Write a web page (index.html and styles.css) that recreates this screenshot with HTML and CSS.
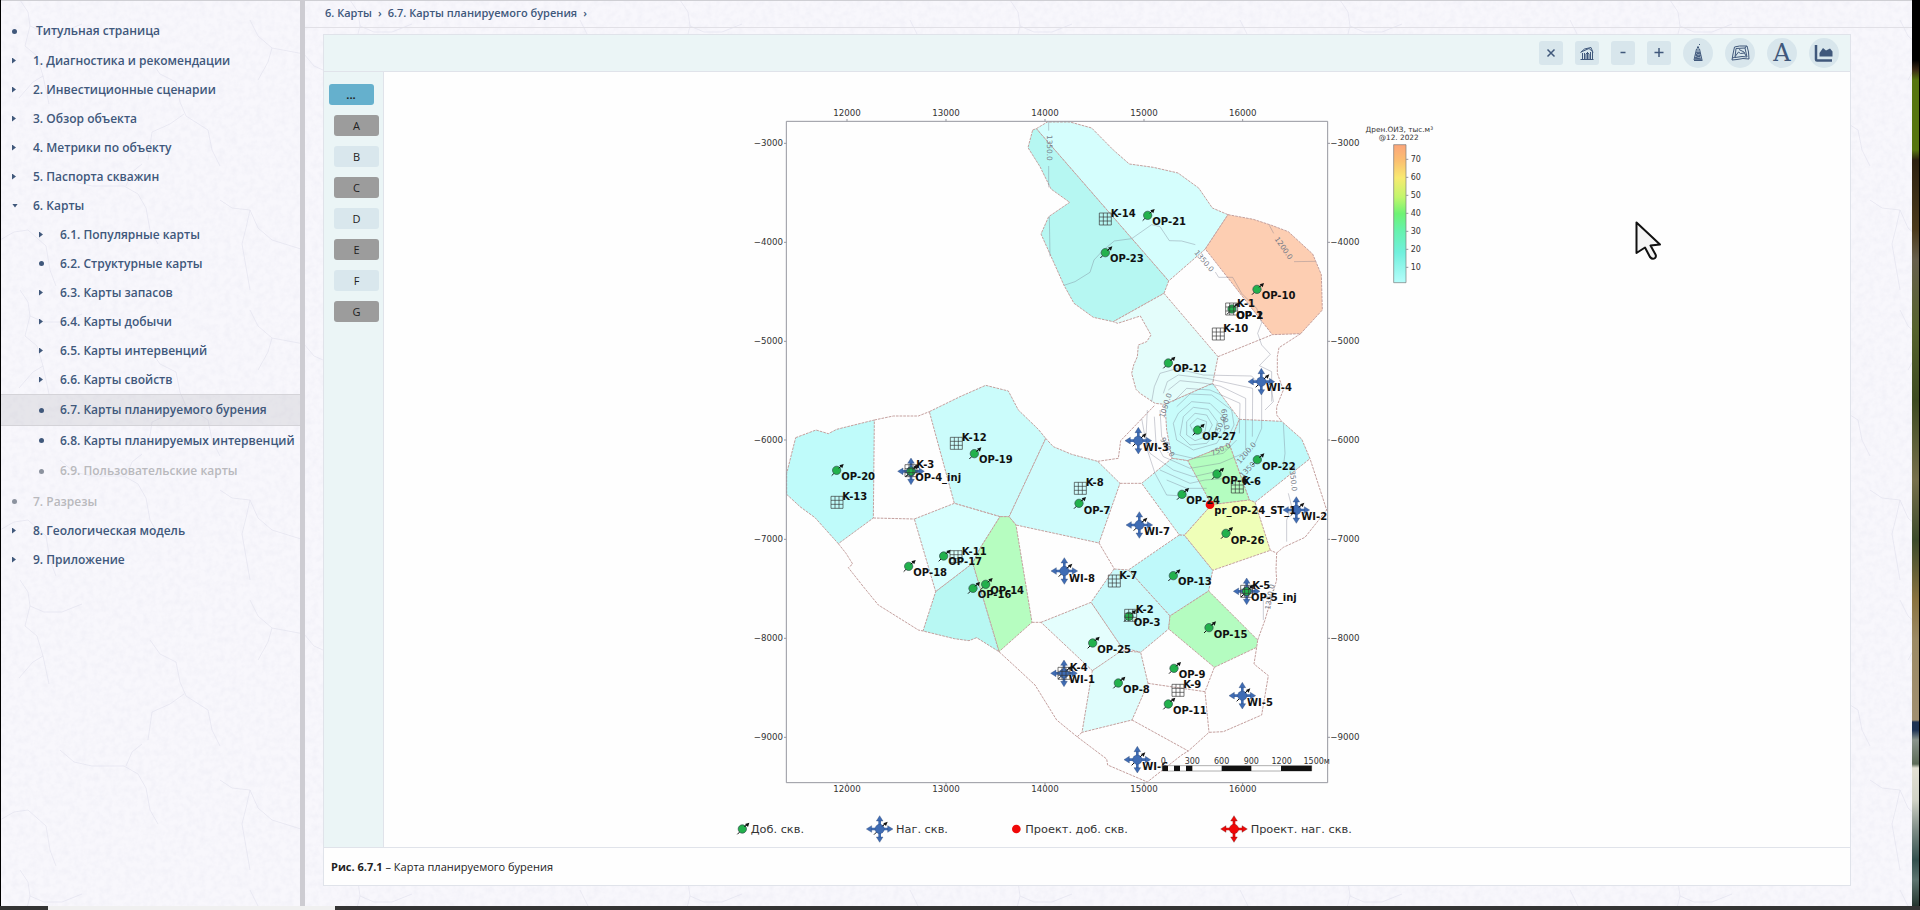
FILE: index.html
```html
<!DOCTYPE html>
<html lang="ru">
<head>
<meta charset="utf-8">
<title>6.7. Карты планируемого бурения</title>
<link rel="stylesheet" href="styles.css">
</head>
<body>
<svg class="texture" aria-hidden="true">
  <defs>
    <filter id="paper" x="0" y="0" width="100%" height="100%">
      <feTurbulence type="fractalNoise" baseFrequency="0.16" numOctaves="4" seed="4"/>
      <feColorMatrix values="0 0 0 0 0.8  0 0 0 0 0.8  0 0 0 0 0.88  0.7 0 0 0 -0.25"/>
    </filter>
    <pattern id="cracks" width="330" height="290" patternUnits="userSpaceOnUse">
      <path d="M20 0l8 12 2 14-5 20 12 10 6 20 6 28M30 26l14 6 18 0 20-8M43 76l-10 6-14 16M150 60l10 14 16 8 4 20 6 14 22 14 4 20 8 16M184 114l-14 10-18 8-4 28M250 20l8 16 14 12 32 6 10 12 18 8M272 48l-4 14-10 18M60 170l14 12 18 4 32 0 14 8 8 14 4 22 8 14M126 186l6-14 10-8M220 200l12 8 18 2 8 18 14 12 32 10M250 210l-4 18-4 16 8 46M0 240l14-8 14-2 18 16 4 24 6 16" fill="none" stroke="#dcdce9" stroke-opacity=".5"/>
    </pattern>
  </defs>
  <rect width="100%" height="100%" filter="url(#paper)"/>
  <rect width="100%" height="100%" fill="url(#cracks)"/>
</svg>

<div class="window">
  <nav class="sidebar" aria-label="Содержание">
    <ul class="tree">
      <li><a class="item item-title" href="#"><i class="dot"></i>Титульная страница</a></li>
      <li><a class="item" href="#"><i class="arrow"></i>1. Диагностика и рекомендации</a></li>
      <li><a class="item" href="#"><i class="arrow"></i>2. Инвестиционные сценарии</a></li>
      <li><a class="item" href="#"><i class="arrow"></i>3. Обзор объекта</a></li>
      <li><a class="item" href="#"><i class="arrow"></i>4. Метрики по объекту</a></li>
      <li><a class="item" href="#"><i class="arrow"></i>5. Паспорта скважин</a></li>
      <li><a class="item" href="#"><i class="arrow arrow-open"></i>6. Карты</a>
        <ul class="tree-sub">
          <li><a class="item" href="#"><i class="arrow"></i>6.1. Популярные карты</a></li>
          <li><a class="item" href="#"><i class="dot"></i>6.2. Структурные карты</a></li>
          <li><a class="item" href="#"><i class="arrow"></i>6.3. Карты запасов</a></li>
          <li><a class="item" href="#"><i class="arrow"></i>6.4. Карты добычи</a></li>
          <li><a class="item" href="#"><i class="arrow"></i>6.5. Карты интервенций</a></li>
          <li><a class="item" href="#"><i class="arrow"></i>6.6. Карты свойств</a></li>
          <li><a class="item item-active" href="#"><i class="dot"></i>6.7. Карты планируемого бурения</a></li>
          <li><a class="item" href="#"><i class="dot"></i>6.8. Карты планируемых интервенций</a></li>
          <li><a class="item item-off item-tall" href="#"><i class="dot"></i>6.9. Пользовательские карты</a></li>
        </ul>
      </li>
      <li><a class="item item-off" href="#"><i class="dot"></i>7. Разрезы</a></li>
      <li><a class="item" href="#"><i class="arrow"></i>8. Геологическая модель</a></li>
      <li><a class="item" href="#"><i class="arrow"></i>9. Приложение</a></li>
    </ul>
  </nav>
  <div class="splitter"></div>

  <main class="content">
    <nav class="crumbs" aria-label="Путь">
      <a href="#">6. Карты</a><span>›</span><a href="#">6.7. Карты планируемого бурения</a><span>›</span>
    </nav>
    <section class="panel">
      <div class="toolbar">
        <button class="tool" aria-label="Закрыть"><svg width="24" height="24"><path d="M8.500 8.500l7 7M15.500 8.500l-7 7" class="ink"/></svg></button>
        <button class="tool" aria-label="Домой"><svg width="24" height="24"><path d="M5.500 11.500L9.500 8l6.500-1.500 2 5M6 11l8-3.500 3.500 3M7.500 18v-6M9.500 18v-6M17.500 18v-7M15.500 18v-7M5.500 18.500h13M11 18v-5q1.500-3 3 0v5M12.500 11v7" class="ink ink-thin"/></svg></button>
        <button class="tool" aria-label="Уменьшить"><svg width="24" height="24"><path d="M9.500 11.500h5" class="ink"/></svg></button>
        <button class="tool" aria-label="Увеличить"><svg width="24" height="24"><path d="M7.500 11.500h9M12 7v9" class="ink"/></svg></button>
        <button class="tool tool-round" aria-label="Скважины"><svg width="30" height="30"><path d="M13.500 11h3l2.500 11h-8zM11 22.500h8.500M13 14l4 2M12.500 17l5 2M12 20l6 1M17 14l-4.500 3M18 17l-6 3M14 9.500h2M15 10V8M16 7l1-1" class="ink ink-thin"/><path d="M14 12h2l2 10h-6z" fill="#40587b" opacity=".5"/></svg></button>
        <button class="tool tool-round" aria-label="Карта"><svg width="30" height="30"><path d="M9.500 9l5-1 7.500 0 1.500 6 .5 7-6-.5-6 1-5 .5 1-6zM11 10.500l9-.5 2 9-5-.5-7 1zM10.500 18l3-4 2 1.500 4-.5M14 11.500l5 2.500 2 4M7.500 20l3-1M20 10l1.500-2" class="ink ink-thin"/></svg></button>
        <button class="tool tool-round tool-letter">A</button>
        <button class="tool tool-round" aria-label="График"><svg width="30" height="30"><path d="M7 7v14.500q0 1 1 1h15" fill="none" stroke="#40587b" stroke-width="2.500"/><path d="M10.500 18.500V15l3.500-5 3 2.500 4-2 2.500 3v5z" fill="#40587b"/></svg></button>
      </div>
      <div class="work">
        <div class="layers">
          <button class="layer layer-main">...</button>
          <button class="layer layer-on">A</button>
          <button class="layer">B</button>
          <button class="layer layer-on">C</button>
          <button class="layer">D</button>
          <button class="layer layer-on">E</button>
          <button class="layer">F</button>
          <button class="layer layer-on">G</button>
        </div>
        <div class="figure">
          <svg class="map" viewBox="-1728 -84 4398 2325" role="img" aria-label="Карта планируемого бурения">
            <defs>
              <linearGradient id="scale" x1="0" y1="0" x2="0" y2="1">
                <stop offset="0" stop-color="#fba57a"/><stop offset=".12" stop-color="#fbc070"/><stop offset=".24" stop-color="#f8ea70"/>
                <stop offset=".38" stop-color="#c2f66c"/><stop offset=".5" stop-color="#6ef374"/><stop offset=".62" stop-color="#66f2ac"/>
                <stop offset=".78" stop-color="#70f0dc"/><stop offset="1" stop-color="#b5fdfb"/>
              </linearGradient>
              <g id="op"><path d="M-15 16L14-13" stroke="#111" stroke-width="3"/><circle r="12.500" fill="#22b14c" stroke="#2d4a4a" stroke-width="2"/><path d="M6-6L12-12" stroke="#111" stroke-width="3"/><path d="M21-19l-4 13-9-9z" fill="#111"/></g>
              <g id="cross"><path d="M-26 0H26M0-26V26" stroke="currentColor" stroke-width="8"/><circle r="14"/><path d="M0-40l10 16H-10zM0 40l10-16H-10zM-40 0l16-10V10zM40 0l-16-10V10z"/></g>
              <g id="wi"><path d="M-17 17L16-16" stroke="#111" stroke-width="3"/><use href="#cross" class="blue"/><path d="M8-8L14-14" stroke="#111" stroke-width="3"/><path d="M24-22l-5 13-8-8z" fill="#111"/></g>
              <path id="k" d="M-18-18H18V18H-18zM-6-18V18M6-18V18M-18-6H18M-18 6H18" fill="none" stroke="#333" stroke-width="2"/>
            </defs>

            <g class="cells">
              <path fill="#d5fefd" d="M229 86L262 66 330 66 395 84 460 150 508 192 580 202 654 219 716 264 757 324 804 344 736 447 626 543z"/>
              <path fill="#b6f7f2" d="M218 90L229 86 626 543 612 580 460 665 400 652 342 610 312 556 278 480 243 402 266 350 329 307 273 267 240 200 204 143z"/>
              <path fill="#fdceb2" d="M804 344L880 358 935 376 985 395 1058 462 1084 524 1087 630 1022 701 937 704 736 447z"/>
              <path fill="#e4fdfb" d="M612 580L774 770 758 850 615 913 585 910 540 880 528 868 515 820 521 795 532 770 535 735 560 725 573 705 541 648 473 670 460 665z"/>
              <path fill="#c8fcfb" d="M615 913L758 850 838 958 808 1033 683 1082 636 1075 620 990z"/>
              <path fill="#bffafa" d="M838 958L965 964 1025 1017 1050 1076 885 1207 868 1200 808 1033z"/>
              <path fill="#b4fdc0" d="M808 1033L868 1200 755 1214 740 1190 683 1082z"/>
              <path fill="#cafcfb" d="M636 1075L683 1082 755 1214 673 1306 658 1305 545 1150z"/>
              <path fill="#efffb8" d="M755 1214L868 1200 885 1207 931 1351 758 1411 673 1306z"/>
              <path fill="#bff9fa" d="M658 1305L673 1306 758 1411 746 1473 630 1548 505 1410z"/>
              <path fill="#cafafb" d="M462 1407L505 1410 630 1548 626 1587 542 1657 485 1642 393 1507z"/>
              <path fill="#b4fcc0" d="M746 1473L893 1620 890 1642 763 1702 626 1587 630 1548z"/>
              <path fill="#e4fefd" d="M243 1567L393 1507 485 1642 480 1660 397 1712z"/>
              <path fill="#dffdfc" d="M397 1712L485 1652 542 1657 564 1750 516 1860 366 1897z"/>
              <path fill="#cffcfc" d="M257 1015L280 1040 335 1063 413 1084 480 1150 417 1329 390 1323 168 1275 147 1250z"/>
              <path fill="#cbfcfb" d="M-92 935L0 890 77 856 145 873 175 930 235 988 257 1015 147 1250 120 1250 -17 1210z"/>
              <path fill="#bffbfa" d="M-493 1013L-432 990 -395 1001 -370 988 -257 960 -260 1254 -365 1331 -435 1253 -480 1220 -520 1183 -520 1120z"/>
              <path fill="#d8fffe" d="M-137 1257L-17 1210 120 1250 60 1345 38 1390 -73 1475z"/>
              <path fill="#b6fdc0" d="M120 1250L147 1250 168 1275 216 1567 117 1655 38 1390 60 1345z"/>
              <path fill="#b8f8f3" d="M-73 1475L38 1390 117 1655 50 1613 27 1622 -17 1616 -111 1593z"/>
              <path fill="none" d="M-257 960L-200 948 -125 948 -92 935M-260 1254L-137 1257M-365 1331L-342 1360 -322 1392 -335 1403 -290 1460 -245 1515 -125 1590 -111 1593M216 1567L243 1567M117 1655L180 1713 225 1755 290 1860 351 1910 440 1977 443 1995 562 2046 665 1965 685 1953 747 1897 790 1895 905 1845 925 1727 882 1692 890 1642M352 1910L366 1897M516 1860L685 1953M564 1750L735 1775M763 1702L735 1775 747 1897M893 1620L915 1560 950 1440 948 1410 950 1359 931 1351M950 1359L970 1342 1035 1312 1100 1230 1050 1076M413 1084L475 1075 482 1022 585 915M480 1150L545 1150M417 1329L463 1407M774 770L937 704M1022 701L957 743 952 770 952 820 970 870 950 920 950 945 965 964"/>
            </g>

            <g class="contours">
              <path d="M266 66V92M266 198V262M268 350L270 470M312 556L345 545 390 517 402 480 430 450 463 423 515 416 575 374 600 380 628 422 665 423 706 434M766 516L776 532 818 532 845 580 890 625 905 668 893 700 905 735 931 763 898 797 935 815 935 905M928 376L941 400M1002 485L1066 484"/>
              <path d="M575 905L583 860 600 820 650 806M650 806L730 825 875 828 905 860 905 985 885 1030M610 880L622 845 655 825 740 835 878 865 877 1010"/>
              <path d="M625 870L660 842 735 850 780 858 857 895 857 1050M640 905L680 865 750 870 840 910 838 1000M650 920L690 882 755 885 815 930 822 975 800 1020"/>
              <path d="M655 940L695 905 750 910 790 950 795 990 770 1030 700 1050 650 1020 640 970zM670 950L700 922 745 928 772 965 765 1000 740 1030 690 1035 660 1005zM680 965L705 940 740 945 757 975 740 1010 705 1022 680 1005zM690 975L712 955 740 965 735 995 705 1005z"/>
              <path d="M600 930L605 1010 635 1060 700 1075 790 1060 830 1020M583 950L588 1030 610 1070 690 1105 780 1090 850 1060M562 930L557 1030 570 1060 640 1110 700 1130 790 1110M545 955L562 1050 585 1120 620 1185 700 1190M600 1110L690 1150 735 1140 800 1135M620 1140L680 1165 740 1165"/>
              <path d="M970 970L975 1060 970 1100M985 1180L995 1220 980 1260 980 1325M935 870L940 905 915 930M910 1500V1560"/>
            </g>
            <g class="contour-labels">
              <text transform="translate(260 105) rotate(90)">1350.0</text>
              <text transform="translate(702 458) rotate(50)">1350.0</text>
              <text transform="translate(943 417) rotate(55)">1200.0</text>
              <text transform="translate(612 955) rotate(-72)">1050.0</text>
              <text transform="translate(783 928) rotate(80)">600.0</text>
              <text transform="translate(773 1010) rotate(-65)">450.0</text>
              <text transform="translate(757 1068) rotate(-25)">750.0</text>
              <text transform="translate(840 1093) rotate(-50)">1200.0</text>
              <text transform="translate(848 1134) rotate(-45)">1350.0</text>
              <text transform="translate(988 1098) rotate(84)">1350.0</text>
              <text transform="translate(600 1018) rotate(60)">900.0</text>
              <text transform="translate(930 1530) rotate(-80)">1350.0</text>
            </g>

            <path class="frame" d="M-521 64H1103V2048H-521zM-339 64v-7M-42 64v-7M255 64v-7M552 64v-7M848 64v-7M-339 2048v7M-42 2048v7M255 2048v7M552 2048v7M848 2048v7M-521 130h-7M-521 427h-7M-521 724h-7M-521 1020h-7M-521 1318h-7M-521 1615h-7M-521 1912h-7M1103 130h7M1103 427h7M1103 724h7M1103 1020h7M1103 1318h7M1103 1615h7M1103 1912h7"/>
            <g class="ticks mid">
              <text x="-339" y="49">12000</text><text x="-42" y="49">13000</text><text x="255" y="49">14000</text><text x="552" y="49">15000</text><text x="848" y="49">16000</text>
              <text x="-339" y="2077">12000</text><text x="-42" y="2077">13000</text><text x="255" y="2077">14000</text><text x="552" y="2077">15000</text><text x="848" y="2077">16000</text>
            </g>
            <g class="ticks end">
              <text x="-531" y="139">−3000</text><text x="-531" y="436">−4000</text><text x="-531" y="733">−5000</text><text x="-531" y="1029">−6000</text><text x="-531" y="1327">−7000</text><text x="-531" y="1624">−8000</text><text x="-531" y="1921">−9000</text>
            </g>
            <g class="ticks">
              <text x="1111" y="139">−3000</text><text x="1111" y="436">−4000</text><text x="1111" y="733">−5000</text><text x="1111" y="1029">−6000</text><text x="1111" y="1327">−7000</text><text x="1111" y="1624">−8000</text><text x="1111" y="1921">−9000</text>
            </g>

            <use href="#wi" x="904" y="845"/><use href="#wi" x="535" y="1022"/><use href="#wi" x="538" y="1275"/><use href="#wi" x="313" y="1413"/><use href="#wi" x="1009" y="1230"/><use href="#wi" x="860" y="1474"/><use href="#wi" x="312" y="1720"/><use href="#wi" x="847" y="1787"/><use href="#wi" x="532" y="1979"/><use href="#wi" x="-147" y="1114"/>
            <use href="#op" x="563" y="346"/><use href="#op" x="436" y="458"/><use href="#op" x="891" y="568"/><use href="#op" x="816" y="627"/><use href="#op" x="625" y="789"/><use href="#op" x="-370" y="1111"/><use href="#op" x="43" y="1061"/><use href="#op" x="-154" y="1399"/><use href="#op" x="-49" y="1368"/><use href="#op" x="39" y="1465"/><use href="#op" x="77" y="1453"/><use href="#op" x="357" y="1210"/><use href="#op" x="713" y="990"/><use href="#op" x="892" y="1079"/><use href="#op" x="771" y="1122"/><use href="#op" x="666" y="1183"/><use href="#op" x="798" y="1300"/><use href="#op" x="640" y="1427"/><use href="#op" x="507" y="1549"/><use href="#op" x="747" y="1583"/><use href="#op" x="398" y="1629"/><use href="#op" x="475" y="1749"/><use href="#op" x="642" y="1705"/><use href="#op" x="625" y="1812"/><use href="#op" x="860" y="1474"/><use href="#op" x="-147" y="1114"/>
            <use href="#k" x="436" y="357"/><use href="#k" x="815" y="627"/><use href="#k" x="775" y="702"/><use href="#k" x="-11" y="1030"/><use href="#k" x="-369" y="1207"/><use href="#k" x="-147" y="1112"/><use href="#k" x="-12" y="1370"/><use href="#k" x="361" y="1165"/><use href="#k" x="832" y="1161"/><use href="#k" x="463" y="1443"/><use href="#k" x="512" y="1546"/><use href="#k" x="860" y="1474"/><use href="#k" x="654" y="1771"/><use href="#k" x="312" y="1720"/>
            <circle cx="750" cy="1214" r="13" fill="#f00808"/>

            <g class="names">
              <text x="577" y="375">OP-21</text><text x="450" y="486">OP-23</text><text x="905" y="597">OP-10</text><text x="829" y="656">OP-1</text><text x="829" y="656">OP-2</text><text x="639" y="817">OP-12</text>
              <text x="-356" y="1139">OP-20</text><text x="57" y="1088">OP-19</text><text x="-140" y="1429">OP-18</text><text x="-35" y="1396">OP-17</text><text x="53" y="1494">OP-16</text><text x="91" y="1482">OP-14</text>
              <text x="371" y="1241">OP-7</text><text x="727" y="1020">OP-27</text><text x="906" y="1110">OP-22</text><text x="785" y="1152">OP-6</text><text x="679" y="1212">OP-24</text><text x="812" y="1331">OP-26</text><text x="654" y="1456">OP-13</text>
              <text x="521" y="1579">OP-3</text><text x="761" y="1614">OP-15</text><text x="412" y="1659">OP-25</text><text x="489" y="1778">OP-8</text><text x="656" y="1733">OP-9</text><text x="639" y="1841">OP-11</text><text x="873" y="1504">OP-5_inj</text><text x="-134" y="1142">OP-4_inj</text>
              <text x="452" y="351">K-14</text><text x="831" y="620">K-1</text><text x="790" y="695">K-10</text><text x="5" y="1023">K-12</text><text x="-353" y="1199">K-13</text><text x="-131" y="1104">K-3</text><text x="5" y="1364">K-11</text><text x="377" y="1158">K-8</text><text x="849" y="1154">K-6</text><text x="478" y="1438">K-7</text><text x="527" y="1539">K-2</text><text x="877" y="1468">K-5</text><text x="670" y="1764">K-9</text><text x="329" y="1712">K-4</text>
              <text x="918" y="873">WI-4</text><text x="549" y="1053">WI-3</text><text x="552" y="1305">WI-7</text><text x="327" y="1445">WI-8</text><text x="1024" y="1259">WI-2</text><text x="327" y="1749">WI-1</text><text x="861" y="1817">WI-5</text><text x="547" y="2009">WI-6</text><text x="763" y="1242">pr_OP-24_ST_1</text>
            </g>

            <path class="bar-back" d="M607 1997H1055V2013H607z"/>
            <path fill="#111" d="M607 1997h17v16h-17zM642 1997h18v16h-18zM678 1997h19v16h-19zM785 1997h89v16h-89zM963 1997h92v16h-92z"/>
            <g class="small mid"><text x="610" y="1991">0</text><text x="697" y="1991">300</text><text x="785" y="1991">600</text><text x="874" y="1991">900</text><text x="965" y="1991">1200</text><text x="1070" y="1991">1500м</text></g>

            <path d="M1301 134H1338V548H1301z" fill="url(#scale)" stroke="#777" stroke-width="2"/>
            <path class="frame" d="M1338 178h7M1338 232h7M1338 286h7M1338 340h7M1338 394h7M1338 448h7M1338 502h7"/>
            <g class="small"><text x="1352" y="187">70</text><text x="1352" y="241">60</text><text x="1352" y="295">50</text><text x="1352" y="349">40</text><text x="1352" y="403">30</text><text x="1352" y="457">20</text><text x="1352" y="511">10</text></g>
            <g class="heading mid"><text x="1318" y="95">Дрен.ОИЗ, тыс.м³</text><text x="1316" y="121">@12. 2022</text></g>

            <use href="#op" x="-653" y="2187"/><use href="#wi" x="-241" y="2187"/><circle cx="169" cy="2187" r="13" fill="#f00808"/><use href="#cross" class="red" x="822" y="2187"/>
            <g class="legend"><text x="-628" y="2200">Доб. скв.</text><text x="-192" y="2200">Наг. скв.</text><text x="196" y="2200">Проект. доб. скв.</text><text x="872" y="2200">Проект. наг. скв.</text></g>
          </svg>
        </div>
      </div>
      <p class="caption"><b>Рис. 6.7.1</b> – Карта планируемого бурения</p>
    </section>
  </main>
  <div class="backdrop"></div>
</div>
<div class="taskbar"><div class="taskbar-window"></div></div>
<svg class="cursor" width="28" height="42" aria-hidden="true"><path d="M2.500 2.500V33l8.500-5.500 5 9.500q2.500 3 5 1 1.500-1.500.5-3.500l-5-9 9.500-1z" fill="#f4f4f4" stroke="#111" stroke-width="2" stroke-linejoin="round"/></svg>
</body>
</html>
```
FILE: styles.css
```css
* { box-sizing: border-box; }
body {
  margin: 0;
  min-height: 100vh;
  display: flex;
  flex-direction: column;
  position: relative;
  background: #f8f7fc;
  color: #40587b;
  font: 600 12px/16px "Open Sans", "Noto Sans", sans-serif;
  overflow-x: hidden;
}
a { color: inherit; text-decoration: none; }
ul { list-style: none; margin: 0; padding: 0; }
button { font: inherit; border: 0; padding: 0; cursor: pointer; }

.texture { position: absolute; left: 0; top: 0; width: 100%; height: 100%; z-index: -1; }
.window { flex: 1; display: flex; border-left: 1px solid #000; }

/* contents tree */
.sidebar { width: 299px; flex: none; padding-top: 15px; border-top: 1px solid #cfcfd4; }
.item { display: flex; align-items: center; height: 29px; padding-left: 8px; white-space: nowrap; }
.tree-sub .item { padding-left: 34px; }
.item-title { height: 30px; }
.item-title .dot { margin-right: 19px; }
.tree-sub .item-tall { height: 32px; }
.item-off { color: #b9b9bd; }
.item-off .dot { background: #8b929e; }
.tree-sub .item-active {
  height: 32px;
  background: rgba(170, 168, 172, .22);
  box-shadow: inset 0 1px #d4d3d8, inset 0 -1px #d4d3d8;
}
.dot, .arrow { flex: none; width: 5px; height: 5px; margin: 0 16px 0 3px; }
.tree-sub .dot, .tree-sub .arrow { margin: 0 16px 0 4px; }
.dot { border-radius: 50%; background: #40587b; }
.arrow {
  width: 4px; height: 6px; margin-right: 17px;
  background: #40587b;
  clip-path: polygon(0 0, 100% 50%, 0 100%);
}
.tree-sub .arrow { margin-right: 17px; }
.arrow-open { width: 6px; height: 4px; margin-right: 15px; clip-path: polygon(0 0, 100% 0, 50% 100%); }

.splitter { width: 5px; flex: none; background: #cdccd2; }

/* main column */
.content { flex: 1; min-width: 0; display: flex; flex-direction: column; }
.crumbs {
  display: flex; align-items: center; gap: 6px;
  height: 28px; padding: 0 0 2px 20px;
  border-top: 1px solid #cfcfd4; border-bottom: 1px solid #e1e0e6;
  font-size: 11px;
}
.panel { margin: 6px 61px 20px 18px; border: 1px solid #e0e3ea; background: #fefefe; }
.toolbar {
  display: flex; justify-content: flex-end; align-items: center; gap: 12px;
  height: 37px; padding-right: 11px;
  background: #ebf5f6; border-bottom: 1px solid #e0e3ea;
}
.tool { width: 24px; height: 24px; border-radius: 3px; background: #d8e6ec; color: #40587b; }
.tool svg { display: block; }
.tool-round { width: 30px; height: 30px; border-radius: 50%; }
.tool-letter { font: 400 24px/28px "DejaVu Serif", serif; }
.ink { fill: none; stroke: #40587b; stroke-width: 1.5px; }
.ink-thin { stroke-width: 1px; }

.work { display: flex; }
.layers {
  width: 60px; flex: none;
  display: flex; flex-direction: column; align-items: center; gap: 10px;
  padding: 12px 4px 0 10px;
  background: #ebf5f6; border-right: 1px solid #e0e3ea;
}
.layer { width: 45px; height: 21px; flex: none; border-radius: 3px; background: #d9e7ed; color: #222; font: 400 11px/21px "Open Sans", "Noto Sans", sans-serif; }
.layer-on { background: #9c9c9c; }
.layer-main { background: #65b0cd; font-weight: 700; line-height: 16px; margin-left: -11px; }
.figure { flex: 1; min-width: 0; }
.map { display: block; width: 100%; height: auto; }
.caption {
  margin: 0; padding: 11px 7px 10px;
  border-top: 1px solid #e0e3ea;
  color: #222; font-weight: 400; font-size: 11px;
}

/* map drawing */
.map text { font-family: "DejaVu Sans", sans-serif; font-weight: 400; fill: #333; }
.cells path { stroke: #c4a09e; stroke-width: 3; stroke-dasharray: 8 3; }
.contours path { fill: none; stroke: #6f7488; stroke-opacity: .42; stroke-width: 2.5; }
.map .contour-labels text { font-size: 22px; fill: #777c88; }
.map .frame { fill: none; stroke: #96979f; stroke-width: 3; }
.map .ticks text { font-size: 26px; }
.map .small text { font-size: 24px; }
.map .heading text { font-size: 22px; }
.map .legend text { font-size: 34px; }
.map .names text { font-size: 30px; font-weight: 700; fill: #111; }
.map .mid text { text-anchor: middle; }
.map .end text { text-anchor: end; }
.bar-back { fill: #fff; stroke: #888; stroke-width: 2; }
.blue { fill: #3f6cb4; color: #3f6cb4; stroke: #2c4168; stroke-width: 1px; }
.red { fill: #f00808; color: #f00808; stroke: #5a1a1a; stroke-width: 1px; }

/* desktop edges around the window */
.backdrop {
  width: 8px; flex: none; border-right: 1px solid #000;
  background: linear-gradient(#000 0 60px, #3a2a16 70px, #57750f 80px 150px, #2c2110 160px, #4b3a1c 230px, #675f4c 260px, #55622c 330px, #3d4a20 400px, #77704c 480px, #3c4a2a 540px, #8a7340 600px, #9c8a64 640px, #a08f70 720px, #1e3354 722px 730px, #8a948c 740px, #5d6b58 764px, #e3e0d4 768px, #d0d2c6 800px, #7e8c86 830px, #33504e 860px, #5d7470 880px, #24352f 100%);
}
.taskbar { height: 4px; background: #343434; padding-left: 48px; }
.taskbar-window { width: 287px; height: 4px; background: #f0f0f0; }
.cursor { position: absolute; left: 1634px; top: 220px; }
```
